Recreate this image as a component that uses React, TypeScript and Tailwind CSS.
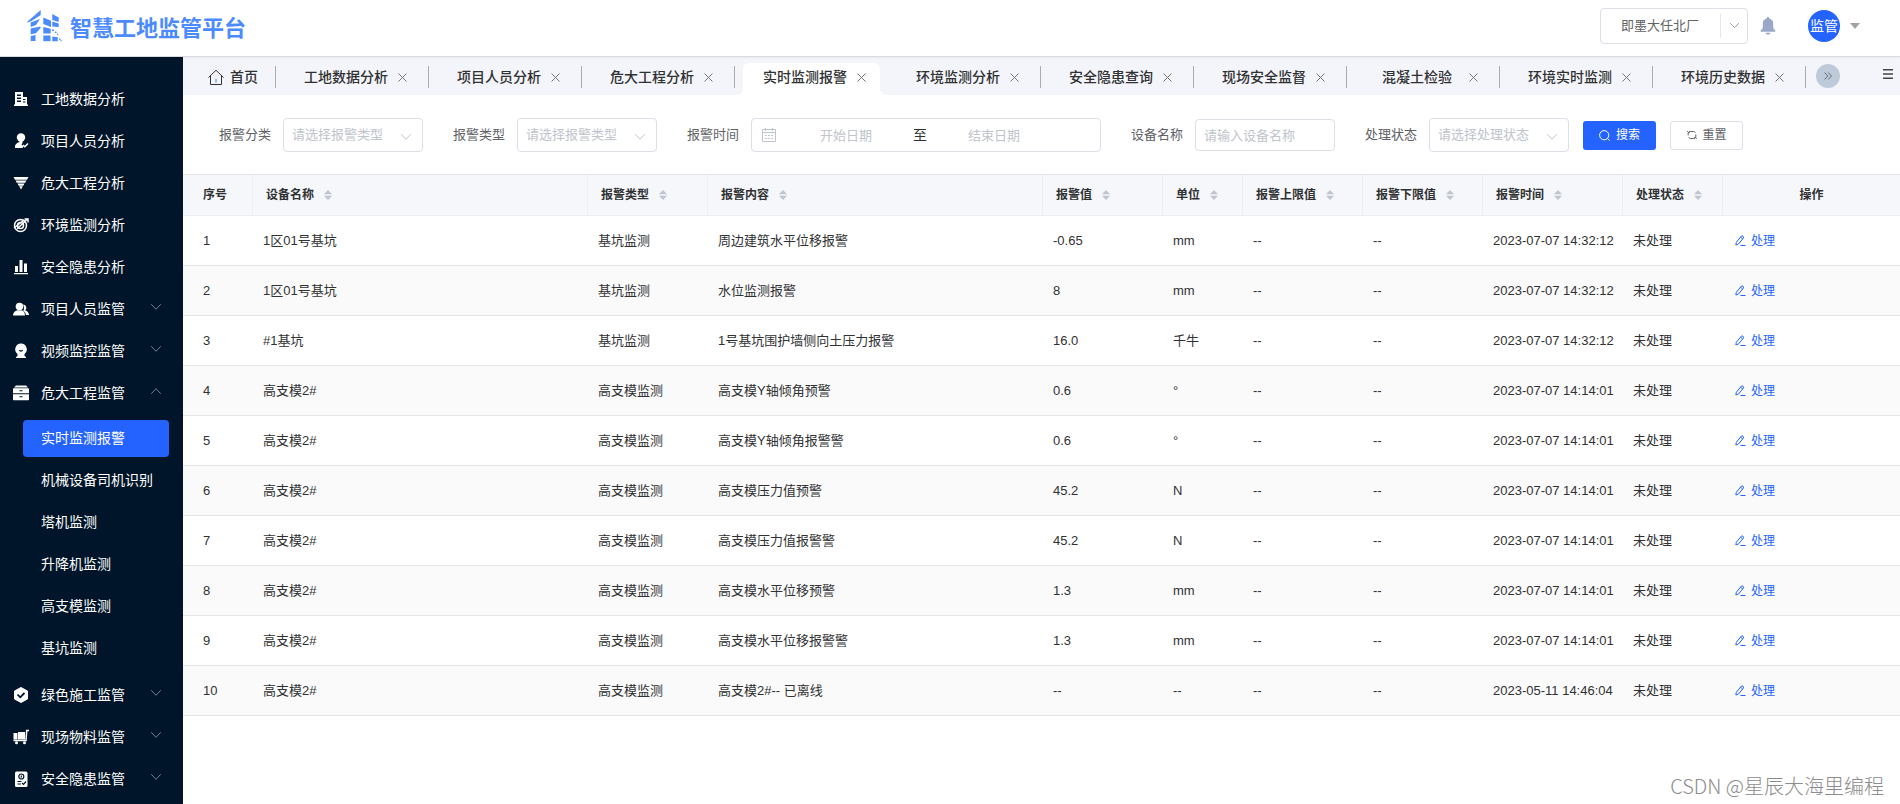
import type { ReactNode } from "react";
import clsx from "clsx";

export default function App() {
    return (
        <div className="relative flex min-h-screen flex-col bg-white font-['Liberation_Sans','Noto_Sans_CJK_SC',sans-serif] text-[13px] text-[#303133]">
            <Header />
            <div className="flex flex-1">
                <Sidebar />
                <main className="min-w-0 flex-1">
                    <TabBar />
                    <Filters />
                    <AlarmTable />
                </main>
            </div>
            <p className="pointer-events-none absolute right-4 bottom-1 font-['Noto_Sans_CJK_SC',sans-serif] text-xl leading-7 font-light text-[#8c8c8c]">
                CSDN @星辰大海里编程
            </p>
        </div>
    );
}

function Header() {
    return (
        <header className="relative z-10 flex h-[57px] items-center justify-between border-b border-[#d8dadd] bg-white pb-1 pl-[27px] shadow-xs">
            <a href="#" className="flex items-center gap-2 text-[#4b8bff]">
                <Logo />
                <span className="font-['Noto_Sans_CJK_SC',sans-serif] text-[22px] leading-8 font-bold">
                    智慧工地监管平台
                </span>
            </a>
            <div className="flex items-center pr-10">
                <div className="relative">
                    <select
                        aria-label="项目"
                        className="h-9 w-[148px] appearance-none rounded border border-[#dcdfe6] bg-white pl-5 text-[13px] text-[#606266]"
                    >
                        <option>即墨大任北厂</option>
                    </select>
                    <span className="pointer-events-none absolute inset-y-1.5 right-0 flex w-7 items-center justify-center border-l border-[#e4e7ed]">
                        <Chevron className="w-[9px] text-[#909399]" />
                    </span>
                </div>
                <button aria-label="通知" className="ml-3">
                    <svg viewBox="0 0 16 18" className="h-[18px] w-4 fill-[#9aa8c7]">
                        <path d="M8 0a1.3 1.3 0 0 1 1.3 1.4A5.2 5.2 0 0 1 13.2 6.600V11l2 2.600c.4.6.2 1.100-.5 1.100H1.300c-.7 0-.9-.5-.5-1.100l2-2.600V6.600A5.200 5.200 0 0 1 6.700 1.400 1.300 1.300 0 0 1 8 0ZM5.500 15.700h5C10.200 17 9.300 17.600 8 17.600S5.800 17 5.500 15.700Z" />
                    </svg>
                </button>
                <button className="ml-8 flex items-center gap-2.5">
                    <span className="flex size-8 items-center justify-center rounded-full bg-[#2463ff] text-sm text-white">
                        监管
                    </span>
                    <svg viewBox="0 0 10 6" className="h-1.5 w-2.5 fill-[#a3a3a3]">
                        <path d="M0 0h10L5 6Z" />
                    </svg>
                </button>
            </div>
        </header>
    );
}

function Logo() {
    return (
        <svg viewBox="0 0 35 32" className="h-8 w-[35px] fill-current">
            <path d="M0 12 13.700 0V5L4.500 11 .5 12.500Z" />
            <path d="M3.700 12.500 13 9 9 15 3.700 17Z" />
            <path d="M3.700 18.500 13.500 16.500V18L9 23.300 3.700 24.300Z" />
            <path d="M3.700 26 8.500 25V31H3.700Z" />
            <path d="M16.300 7.500 24 10.700V17L16.300 14Z" />
            <path d="M25.300 4 31.700 7.500v4.500l-6.400-2ZM25.300 11.500l6.400 2v3.500l-6.400-.5Z" />
            <path d="M16.300 17 23.700 18.700V23.500H16.300Z" />
            <path d="M16.300 25.500h7.200V31.200H16.300Z" />
            <path d="M25.300 26.500l5.500.8v4h-5.500ZM25 19.500h2v1.500h-2ZM28 21.500h1.500V23H28ZM30 23.500h1.300v1.300H30ZM32 28l1.500 1v1.200L32 29.500ZM33.500 30.300h1.300v1h-1.300Z" />
        </svg>
    );
}

function Chevron({ className, up }: { className?: string; up?: boolean }) {
    return (
        <svg
            viewBox="0 0 10 6"
            fill="none"
            stroke="currentColor"
            strokeLinecap="round"
            strokeLinejoin="round"
            className={clsx(className, up && "rotate-180")}
        >
            <path d="M.5.5 5 5.300 9.500.5" />
        </svg>
    );
}

function Sidebar() {
    return (
        <nav className="w-[183px] shrink-0 bg-[#001529] pt-[21px] text-sm text-white">
            <ul>
                {menu.map((item) => (
                    <li key={item.title}>
                        <a href="#" className="flex h-[42px] items-center pr-[22px] pl-3">
                            <svg viewBox="0 0 18 18" className="mr-[11px] size-[18px] fill-white">
                                {item.icon}
                            </svg>
                            <span className="flex-1">{item.title}</span>
                            {item.expandable && (
                                <Chevron className="mb-1 w-2.5 text-[#75808c]" up={Boolean(item.children)} />
                            )}
                        </a>
                        {item.children && (
                            <ul className="pt-[3px] pr-3.5 pb-[5px] pl-[23px]">
                                {item.children.map((child) => (
                                    <li key={child} className="flex h-[42px] items-center">
                                        <a
                                            href="#"
                                            className={clsx(
                                                "flex h-[37px] w-full items-center rounded pl-[18px]",
                                                child === "实时监测报警" && "bg-[#2463ff]",
                                            )}
                                        >
                                            {child}
                                        </a>
                                    </li>
                                ))}
                            </ul>
                        )}
                    </li>
                ))}
            </ul>
        </nav>
    );
}

function TabBar() {
    return (
        <div className="flex h-[38px] items-center overflow-hidden bg-[#f4f5fa] pt-0.5 text-sm font-medium text-[#303133]">
            <a href="#" className="flex h-[22px] w-[93px] shrink-0 items-center gap-1.5 border-r border-[#a8abb2] pl-[25px]">
                <svg viewBox="0 0 16 16" className="size-4" fill="none" stroke="currentColor">
                    <path d="M.5 8.500 8 1.300l7.500 7.200M2.500 7v8.500h11V7" />
                    <path d="M8 10v3.500" stroke="#2b8fd8" />
                </svg>
                首页
            </a>
            {tabs.map((tab) => {
                const active = tab === "实时监测报警";
                return (
                    <div
                        key={tab}
                        className={clsx(
                            "relative flex shrink-0 items-center",
                            active
                                ? "mx-2 h-8 w-[137px] self-end rounded-t-md bg-white pb-1 pl-5 before:absolute before:bottom-0 before:-left-1.5 before:size-1.5 before:bg-[radial-gradient(circle_at_0_0,transparent_6px,white_6px)] after:absolute after:-right-1.5 after:bottom-0 after:size-1.5 after:bg-[radial-gradient(circle_at_100%_0,transparent_6px,white_6px)]"
                                : "h-[22px] w-[153px] border-r border-[#a8abb2] pl-7",
                        )}
                    >
                        <a href="#" className="w-[84px] text-center">
                            {tab}
                        </a>
                        <button aria-label={`关闭${tab}`} className="ml-2.5">
                            <svg viewBox="0 0 9 9" className="size-[9px]" fill="none" stroke="#72767b">
                                <path d="m.5.5 8 8M8.500.5l-8 8" />
                            </svg>
                        </button>
                    </div>
                );
            })}
            <button
                aria-label="更多标签"
                className="mb-0.5 ml-2.5 flex size-6 shrink-0 items-center justify-center rounded-full bg-[#bfcad9]"
            >
                <svg viewBox="0 0 8 8" className="size-2" fill="none" stroke="#606f84">
                    <path d="m.5.5 3.300 3.500L.5 7.500M4.200.5 7.500 4 4.200 7.500" />
                </svg>
            </button>
            <button aria-label="标签菜单" className="mr-[7px] mb-1.5 ml-auto shrink-0">
                <svg viewBox="0 0 10 10" className="size-2.5 fill-[#444]">
                    <path d="M0 0h10v1.500H0ZM0 4.300h10v1.500H0ZM0 8.500h10V10H0Z" />
                </svg>
            </button>
        </div>
    );
}

function FilterSelect({ id, label, placeholder }: { id: string; label: string; placeholder: string }) {
    return (
        <div className="flex items-center gap-3">
            <label htmlFor={id}>{label}</label>
            <div className="relative">
                <select
                    id={id}
                    className="h-[34px] w-[140px] appearance-none rounded border border-[#dcdfe6] bg-white pl-2 text-[13px] text-[#c0c4cc]"
                >
                    <option>{placeholder}</option>
                </select>
                <Chevron className="pointer-events-none absolute top-4 right-3 w-2.5 text-[#c0c4cc]" />
            </div>
        </div>
    );
}

function Filters() {
    return (
        <form className="flex flex-wrap items-center gap-x-[30px] gap-y-2 pt-[23px] pr-4 pb-[22px] pl-9 text-[13px] text-[#606266]">
            <FilterSelect id="alarm-category" label="报警分类" placeholder="请选择报警类型" />
            <FilterSelect id="alarm-type" label="报警类型" placeholder="请选择报警类型" />
            <div className="flex items-center gap-3">
                <label htmlFor="date-start">报警时间</label>
                <div className="flex h-[34px] w-[350px] items-center rounded border border-[#dcdfe6] pl-2.5">
                    <svg viewBox="0 0 14 14" className="mr-1 size-3.5" fill="none" stroke="#c0c4cc">
                        <path d="M.5 1.500h13v12H.5ZM.5 4.500h13M3.500 0v3M10.500 0v3" />
                        <path d="M3 7.500h8M3 10.500h8" strokeDasharray="2 1" />
                    </svg>
                    <input
                        id="date-start"
                        placeholder="开始日期"
                        className="w-[132px] pt-0.5 text-center placeholder:text-[#c0c4cc]"
                    />
                    <span className="w-4 text-center text-sm text-[#303133]">至</span>
                    <input
                        aria-label="结束日期"
                        placeholder="结束日期"
                        className="w-[132px] pt-0.5 text-center placeholder:text-[#c0c4cc]"
                    />
                </div>
            </div>
            <div className="flex items-center gap-3">
                <label htmlFor="device-name">设备名称</label>
                <input
                    id="device-name"
                    placeholder="请输入设备名称"
                    className="h-8 w-[140px] rounded border border-[#dcdfe6] px-2 placeholder:text-[#c0c4cc]"
                />
            </div>
            <div className="flex items-center gap-3.5">
                <FilterSelect id="status" label="处理状态" placeholder="请选择处理状态" />
                <button
                    type="button"
                    className="flex h-[29px] w-[73px] items-center justify-center gap-1.5 rounded-[3px] bg-[#2463ff] text-xs text-white"
                >
                    <svg viewBox="0 0 11 11" className="size-[11px]" fill="none" stroke="currentColor">
                        <circle cx="5.200" cy="5.200" r="4.600" />
                        <path d="m8.500 8.500 2.200 2.200" />
                    </svg>
                    搜索
                </button>
                <button
                    type="reset"
                    className="flex h-[29px] w-[73px] items-center justify-center gap-1.5 rounded-[3px] border border-[#dcdfe6] text-xs"
                >
                    <svg viewBox="0 0 10 10" className="size-2.5" fill="none" stroke="currentColor">
                        <path d="M1.200 5.500V3.500a2 2 0 0 1 2-2h3.300a2 2 0 0 1 1.800 1.200M.3 1.200l1.200 1.600L3 1.800M8.800 4.500v2a2 2 0 0 1-2 2H3.500a2 2 0 0 1-1.800-1.200M9.700 8.800 8.500 7.200 7 8.200" />
                    </svg>
                    重置
                </button>
            </div>
        </form>
    );
}

function SortCaret() {
    return (
        <svg viewBox="0 0 8 10" className="h-2.5 w-2 fill-[#c0c4cc]">
            <path d="M4 0l4 4.200H0ZM4 10 0 5.800h8Z" />
        </svg>
    );
}

function AlarmTable() {
    return (
        <table className="w-full table-fixed border-separate border-spacing-0 text-left">
            <thead className="bg-[#f5f7fa] text-xs text-[#303133]">
                <tr>
                    {columns.map((col) => (
                        <th
                            key={col.title}
                            className={clsx(
                                "h-[42px] border-t border-b border-t-[#e2e4e8] border-b-[#ebeef5] px-3 py-0 font-bold",
                                col.width,
                                col.title === "序号" && "pl-5",
                                col.title === "操作" ? "text-center" : "border-r border-r-[#ebeef5]",
                            )}
                        >
                            {col.sortable ? (
                                <button className="flex items-center gap-2.5 pl-px font-bold">
                                    {col.title}
                                    <SortCaret />
                                </button>
                            ) : (
                                col.title
                            )}
                        </th>
                    ))}
                </tr>
            </thead>
            <tbody>
                {rows.map((row, i) => (
                    <tr key={i} className="even:bg-[#fafafa]">
                        <td className="h-[50px] border-b border-[#e4e6ea] py-0 pl-5">{i + 1}</td>
                        {row.map((cell, j) => (
                            <td key={j} className="border-b border-[#e4e6ea] px-2.5 py-0 whitespace-nowrap">
                                {cell}
                            </td>
                        ))}
                        <td className="border-b border-[#e4e6ea] px-3 py-0">
                            <button className="flex items-center gap-[5px] text-xs text-[#2463ff]">
                                <svg viewBox="0 0 11 11" className="size-[11px]" fill="none" stroke="currentColor">
                                    <path d="M1.300 7.300 6.300 1.200c.8-1 3 .6 2.200 1.700L3.500 9l-2.600 1ZM5.500 2.200l2.200 1.700M5.500 10.500h5" />
                                </svg>
                                处理
                            </button>
                        </td>
                    </tr>
                ))}
            </tbody>
        </table>
    );
}

interface MenuItem {
    title: string;
    icon: ReactNode;
    expandable?: boolean;
    children?: string[];
}

const menu: MenuItem[] = [
    {
        title: "工地数据分析",
        icon: (
            <path
                fillRule="evenodd"
                d="M3 2h8v5h4v7.500h1V16H2v-1.500h1ZM5 4.500V6h4V4.500ZM5 7.500V9h4V7.500ZM5 10.500V12h4v-1.500ZM11 9v1h2.500V9ZM11 11.500v1h2.500v-1Z"
            />
        ),
    },
    {
        title: "项目人员分析",
        icon: (
            <>
                <circle cx="9" cy="5.500" r="4.200" />
                <path d="M7.500 8.500h3V11l-1 1.500 2 2-1 1.500H3v-1.500c0-2 1.500-3.500 4.500-4.500Z" />
                <path d="m11 13 1.800 1.800L16 11.500" fill="none" stroke="white" strokeWidth="1.500" />
            </>
        ),
    },
    {
        title: "危大工程分析",
        icon: <path d="M1.500 3h15l-1.500 2.700H3ZM3.500 6.500h11l-1.300 2.200H4.800ZM5.500 9.500h7l-1.200 2.200H6.700ZM7.200 12.300h3.600L9 15.500Z" />,
    },
    {
        title: "环境监测分析",
        icon: (
            <g fill="none" stroke="white" strokeWidth="1.500">
                <circle cx="8.500" cy="9.500" r="6" />
                <circle cx="8.500" cy="9.500" r="3" />
                <path d="m5 13 11-10.500M12.500 3H16v3.500M2 12l10-8" />
            </g>
        ),
    },
    {
        title: "安全隐患分析",
        icon: <path d="M3 8h3v6H3ZM7.500 2h3v12h-3ZM12 5.500h3V14h-3ZM2 15h14v1.200H2Z" />,
    },
    {
        title: "项目人员监管",
        expandable: true,
        icon: (
            <>
                <path d="M11 4.500a3.300 3.300 0 0 1 2.200 5.800c2.200.8 3.500 2 3.800 4.700h-3c-.3-2-1.200-3.200-2.700-4 1-1.800 1.200-4-.3-6.500Z" />
                <circle cx="7.500" cy="6.500" r="3.800" />
                <path d="M1 15.500c.2-3.500 2.500-4.700 4.500-5.200h4c2 .5 3.300 2 3.500 5.200Z" />
            </>
        ),
    },
    {
        title: "视频监控监管",
        expandable: true,
        icon: (
            <path
                fillRule="evenodd"
                d="M9 1.500a5.800 5.800 0 0 1 3.500 10.400V14l1.500 1v1H4v-1l1.500-1v-2.100A5.800 5.800 0 0 1 9 1.500ZM6.800 7.500c.3 3 4.100 3 4.400 0l-1.200.8H8Z"
            />
        ),
    },
    {
        title: "危大工程监管",
        expandable: true,
        icon: (
            <path
                fillRule="evenodd"
                d="M4 1.500h10L16 3.500H2ZM2 4.300h14c.7 0 1 .4 1 1v4H1v-4c0-.6.3-1 1-1ZM7.500 6.300v1h3v-1ZM1 10.300h16v5c0 .6-.3 1-1 1H2c-.7 0-1-.4-1-1ZM7.500 12.300v1h3v-1Z"
            />
        ),
        children: ["实时监测报警", "机械设备司机识别", "塔机监测", "升降机监测", "高支模监测", "基坑监测"],
    },
    {
        title: "绿色施工监管",
        expandable: true,
        icon: (
            <>
                <path d="M9 1.500 15.500 5v8L9 16.500 2.500 13V5Z" stroke="white" strokeLinejoin="round" />
                <path d="m5.500 8.500 2.700 2.800L12.500 7" fill="none" stroke="#001529" strokeWidth="1.800" />
            </>
        ),
    },
    {
        title: "现场物料监管",
        expandable: true,
        icon: (
            <>
                <path d="M1.500 5h4v6.500h-4ZM6 4h7v7.500H6Z" />
                <path d="M17 2.500h-2.300L14 12.500H1.500" fill="none" stroke="white" strokeWidth="1.500" />
                <circle cx="4.500" cy="14.800" r="1.500" />
                <circle cx="12.500" cy="14.800" r="1.500" />
            </>
        ),
    },
    {
        title: "安全隐患监管",
        expandable: true,
        icon: (
            <>
                <rect x="3" y="1.500" width="12.500" height="15.500" rx="1.500" />
                <g fill="none" stroke="#001529" strokeWidth="1.200">
                    <circle cx="9.300" cy="6.500" r="2.500" />
                    <path d="M9.300 5.500v2M5.500 11.500h4M5.500 14h3.500M10 13l1.500 1.300 2.500-2.800" />
                </g>
            </>
        ),
    },
];

const tabs = [
    "工地数据分析",
    "项目人员分析",
    "危大工程分析",
    "实时监测报警",
    "环境监测分析",
    "安全隐患查询",
    "现场安全监督",
    "混凝土检验",
    "环境实时监测",
    "环境历史数据",
];

const columns = [
    { title: "序号", width: "w-[70px]" },
    { title: "设备名称", width: "", sortable: true },
    { title: "报警类型", width: "w-[120px]", sortable: true },
    { title: "报警内容", width: "", sortable: true },
    { title: "报警值", width: "w-[120px]", sortable: true },
    { title: "单位", width: "w-[80px]", sortable: true },
    { title: "报警上限值", width: "w-[120px]", sortable: true },
    { title: "报警下限值", width: "w-[120px]", sortable: true },
    { title: "报警时间", width: "w-[140px]", sortable: true },
    { title: "处理状态", width: "w-[100px]", sortable: true },
    { title: "操作", width: "w-[177px]" },
];

const rows = [
    ["1区01号基坑", "基坑监测", "周边建筑水平位移报警", "-0.65", "mm", "--", "--", "2023-07-07 14:32:12", "未处理"],
    ["1区01号基坑", "基坑监测", "水位监测报警", "8", "mm", "--", "--", "2023-07-07 14:32:12", "未处理"],
    ["#1基坑", "基坑监测", "1号基坑围护墙侧向土压力报警", "16.0", "千牛", "--", "--", "2023-07-07 14:32:12", "未处理"],
    ["高支模2#", "高支模监测", "高支模Y轴倾角预警", "0.6", "°", "--", "--", "2023-07-07 14:14:01", "未处理"],
    ["高支模2#", "高支模监测", "高支模Y轴倾角报警警", "0.6", "°", "--", "--", "2023-07-07 14:14:01", "未处理"],
    ["高支模2#", "高支模监测", "高支模压力值预警", "45.2", "N", "--", "--", "2023-07-07 14:14:01", "未处理"],
    ["高支模2#", "高支模监测", "高支模压力值报警警", "45.2", "N", "--", "--", "2023-07-07 14:14:01", "未处理"],
    ["高支模2#", "高支模监测", "高支模水平位移预警", "1.3", "mm", "--", "--", "2023-07-07 14:14:01", "未处理"],
    ["高支模2#", "高支模监测", "高支模水平位移报警警", "1.3", "mm", "--", "--", "2023-07-07 14:14:01", "未处理"],
    ["高支模2#", "高支模监测", "高支模2#-- 已离线", "--", "--", "--", "--", "2023-05-11 14:46:04", "未处理"],
];
